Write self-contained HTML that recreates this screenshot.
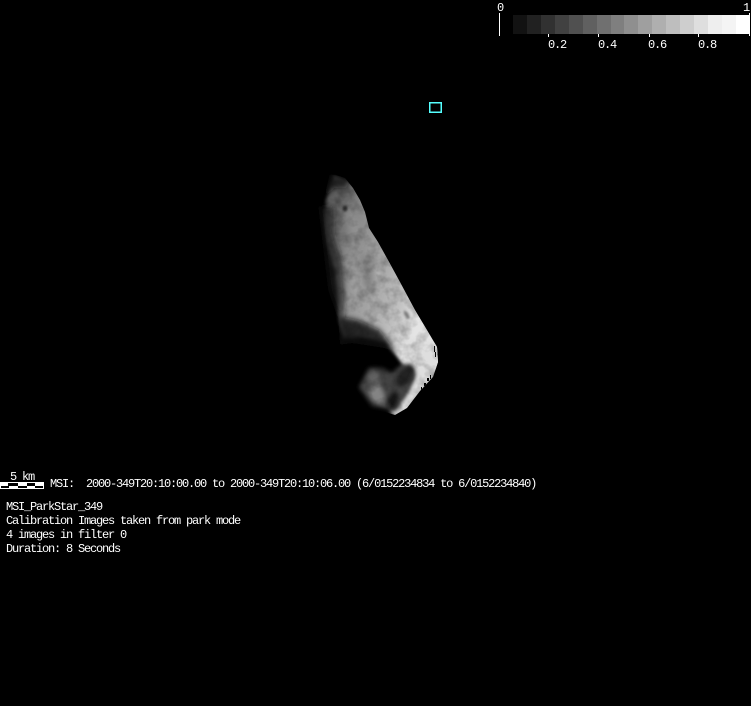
<!DOCTYPE html>
<html><head><meta charset="utf-8">
<style>
html,body{margin:0;padding:0;background:#000;width:751px;height:706px;overflow:hidden}
svg{display:block}
text{font-family:"Liberation Mono",monospace;font-size:12px;letter-spacing:-1.2px;fill:#fff;white-space:pre}
</style></head><body>
<svg width="751" height="706" viewBox="0 0 751 706" xmlns="http://www.w3.org/2000/svg" xml:space="preserve">
<defs>
<filter id="b1" x="-50%" y="-50%" width="200%" height="200%"><feGaussianBlur stdDeviation="1"/></filter>
<filter id="b15" x="-50%" y="-50%" width="200%" height="200%"><feGaussianBlur stdDeviation="1.500"/></filter>
<filter id="b2" x="-50%" y="-50%" width="200%" height="200%"><feGaussianBlur stdDeviation="2"/></filter>
<filter id="b3" x="-50%" y="-50%" width="200%" height="200%"><feGaussianBlur stdDeviation="3"/></filter>
<filter id="n" x="0" y="0" width="100%" height="100%"><feTurbulence type="fractalNoise" baseFrequency="0.09" numOctaves="3" seed="7"/><feColorMatrix values="0 0 0 0 0  0 0 0 0 0  0 0 0 0 0  1.600 0 0 0 -0.650"/></filter>
<clipPath id="limb"><path d="M333 174L345 178L353 188L360 200L365 212L369 228L378 242L388 260L400 282L415 310L427 330L437 347L438 362L433 377L420 391L407 408L395 415L385 412L350 420L300 350L300 174Z"/></clipPath>
<linearGradient id="g" gradientUnits="userSpaceOnUse" x1="330" y1="230" x2="435" y2="262"><stop offset="0" stop-color="#5e5e5e"/><stop offset="0.2" stop-color="#888888"/><stop offset="0.5" stop-color="#a2a2a2"/><stop offset="0.8" stop-color="#c0c0c0"/><stop offset="1" stop-color="#e4e4e4"/></linearGradient>
</defs>
<rect width="751" height="706" fill="#000"/>
<!-- colorbar -->
<g>
<rect x="513" y="15" width="14" height="19" fill="#121212"/><rect x="527" y="15" width="14" height="19" fill="#212121"/><rect x="541" y="15" width="14" height="19" fill="#313131"/><rect x="555" y="15" width="14" height="19" fill="#414141"/><rect x="569" y="15" width="14" height="19" fill="#505050"/><rect x="583" y="15" width="14" height="19" fill="#606060"/><rect x="597" y="15" width="14" height="19" fill="#707070"/><rect x="611" y="15" width="13" height="19" fill="#7f7f7f"/><rect x="624" y="15" width="14" height="19" fill="#8f8f8f"/><rect x="638" y="15" width="14" height="19" fill="#9f9f9f"/><rect x="652" y="15" width="14" height="19" fill="#afafaf"/><rect x="666" y="15" width="14" height="19" fill="#bebebe"/><rect x="680" y="15" width="14" height="19" fill="#cecece"/><rect x="694" y="15" width="14" height="19" fill="#dedede"/><rect x="708" y="15" width="14" height="19" fill="#eeeeee"/><rect x="722" y="15" width="14" height="19" fill="#f4f4f4"/><rect x="736" y="15" width="13" height="19" fill="#fff"/>
<rect x="499" y="13" width="1" height="23" fill="#fff"/>
<rect x="749" y="13" width="1" height="23" fill="#fff"/>
<rect x="548" y="34" width="1" height="3" fill="#fff"/><rect x="598" y="34" width="1" height="3" fill="#fff"/><rect x="649" y="34" width="1" height="3" fill="#fff"/><rect x="698" y="34" width="1" height="3" fill="#fff"/>
<text x="497" y="11">0</text><text x="743" y="11">1</text>
<text x="548" y="48">0.2</text><text x="598" y="48">0.4</text><text x="648" y="48">0.6</text><text x="698" y="48">0.8</text>
</g>
<!-- cyan box -->
<rect x="429.75" y="102.75" width="11.5" height="9.5" fill="none" stroke="#55ffff" stroke-width="1.500"/>
<!-- asteroid -->
<g clip-path="url(#limb)">
<path filter="url(#b15)" d="M334 176L370 190L385 240L445 340L445 372L425 368L405 368L398 358L385 342L360 337L344 338L339 320L338 300L335 272L328 245L325 226L326 200Z" fill="url(#g)"/>
<g filter="url(#b3)">
<path d="M330 174L350 179L346 188L334 188L324 198Z" fill="#141414" opacity=".8"/>
<path d="M320 206L334 208L333 232L342 262L345 298L342 325L330 290Z" fill="#181818" opacity=".7"/>
<path d="M338 316L358 320L380 330L396 352L384 348L352 343L340 345Z" fill="#0c0c0c" opacity=".85"/>
<path d="M342 205L354 212L362 238L350 232Z" fill="#9a9a9a" opacity=".5"/>
<path d="M362 252L370 262L374 292L364 286Z" fill="#6c6c6c" opacity=".6"/>
<path d="M350 262L360 282L360 310L352 300Z" fill="#aaa" opacity=".5"/>
</g>
<path filter="url(#b2)" d="M398 352L412 338L442 345L442 366L424 392L408 412L394 418L390 410L404 396L414 378L410 364Z" fill="#dedede"/>
<g filter="url(#b2)">
<path d="M359 387L369 368L382 368L392 373L402 364L412 364L416 374L408 392L396 412L384 408L372 406Z" fill="#444"/>
<path d="M371 387L378 383L384 394L384 405L375 403L368 393Z" fill="#848484"/>
<path d="M366 376L376 371L382 380L372 384Z" fill="#626262"/>
<path d="M398 372L409 364L415 368L410 382L402 388L395 382Z" fill="#222"/>
<path d="M386 400L393 390L400 394L396 408L390 411Z" fill="#141414"/>
</g>
<g filter="url(#b1)">
<ellipse cx="345" cy="208.500" rx="2.500" ry="3" fill="#2e2e2e"/>
<ellipse cx="379" cy="273" rx="2.500" ry="2" fill="#c4c4c4"/>
<path d="M404 310l4 3 2 5-3 1-3-5z" fill="#7c7c7c"/>
</g>
<rect x="320" y="170" width="125" height="250" filter="url(#n)" opacity=".32"/>
<g fill="#000">
<rect x="434" y="346" width="1" height="6"/><rect x="435" y="352" width="1" height="5"/><rect x="430" y="375" width="1" height="4"/><rect x="427" y="378" width="2" height="3"/><rect x="424" y="383" width="2" height="3"/><rect x="421" y="387" width="1" height="3"/>
</g>
</g>
<!-- scale bar -->
<g>
<text x="10" y="480">5 km</text>
<rect x="0" y="482" width="44" height="1" fill="#fff"/>
<rect x="0" y="482" width="1" height="7" fill="#fff"/><rect x="43" y="482" width="1" height="7" fill="#fff"/>
<rect x="0" y="483" width="8" height="3" fill="#fff"/><rect x="18" y="483" width="9" height="3" fill="#fff"/><rect x="35" y="483" width="8" height="3" fill="#fff"/>
<rect x="9" y="486" width="9" height="3" fill="#fff"/><rect x="27" y="486" width="8" height="3" fill="#fff"/>
<rect x="0" y="488" width="44" height="1" fill="#fff"/>
</g>
<text x="50" y="487">MSI:  2000-349T20:10:00.00 to 2000-349T20:10:06.00 (6/0152234834 to 6/0152234840)</text>
<text x="6" y="510">MSI_ParkStar_349</text>
<text x="6" y="524">Calibration Images taken from park mode</text>
<text x="6" y="538">4 images in filter 0</text>
<text x="6" y="552">Duration: 8 Seconds</text>
</svg>
</body></html>
